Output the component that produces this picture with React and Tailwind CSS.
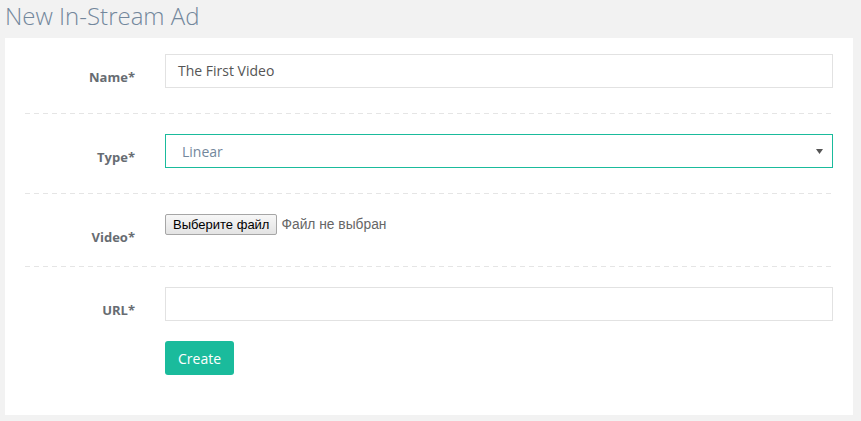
export default function App() {
  const divider = (
    <div className="h-px w-full bg-[repeating-linear-gradient(90deg,#e5e5e5_0px,#e5e5e5_5px,transparent_5px,transparent_9px)]" />
  );
  const Label = ({ children }) => (
    <div className="w-[140px] shrink-0 pr-[30px] pt-[13px] text-right text-[13px] leading-[20px] font-bold text-[#676c72]">
      {children}
    </div>
  );
  return (
    <div className="w-[861px] h-[421px] overflow-hidden bg-[#f2f2f2] font-['Open_Sans',sans-serif]">
      <div className="h-[38px] pl-[5px] pt-px text-[24px] leading-[30px] font-light text-[#73879C]">
        New In-Stream Ad
      </div>
      <div className="ml-[5px] w-[848px] h-[377px] bg-white px-5 pt-4">
        <div className="flex h-[59px]">
          <Label>Name*</Label>
          <div className="flex-1">
            <div className="h-[34px] border border-[#e2e2e2] pl-3 text-[14px] leading-[32px] text-[#555]">
              The First Video
            </div>
          </div>
        </div>
        {divider}
        <div className="flex h-[79px] pt-5">
          <Label>Type*</Label>
          <div className="flex-1">
            <div className="flex h-[34px] items-center justify-between border border-[#1ABB9C] pl-4 pr-[9px] text-[14px] text-[#73879C]">
              <span>Linear</span>
              <svg width="7" height="5" viewBox="0 0 7 5">
                <path d="M0 0H7L3.5 5Z" fill="#555" />
              </svg>
            </div>
          </div>
        </div>
        {divider}
        <div className="flex h-[72px] pt-5">
          <Label>Video*</Label>
          <div className="flex flex-1 items-start font-['Liberation_Sans',sans-serif] text-[13px]">
            <div className="h-[21px] rounded-[2px] border border-[#a6a6a6] bg-[linear-gradient(#f7f7f7,#e3e3e3)] px-[7px] leading-[19px] text-black">
              Выберите файл
            </div>
            <span className="ml-[4px] text-[13.8px] leading-[21px] text-[#666]">Файл не выбран</span>
          </div>
        </div>
        {divider}
        <div className="flex pt-5">
          <Label>URL*</Label>
          <div className="flex-1">
            <div className="h-[34px] border border-[#e2e2e2]" />
            <button className="mt-5 h-[34px] rounded-[3px] bg-[#1ABB9C] px-[13px] text-[14px] text-white">
              Create
            </button>
          </div>
        </div>
      </div>
    </div>
  );
}
